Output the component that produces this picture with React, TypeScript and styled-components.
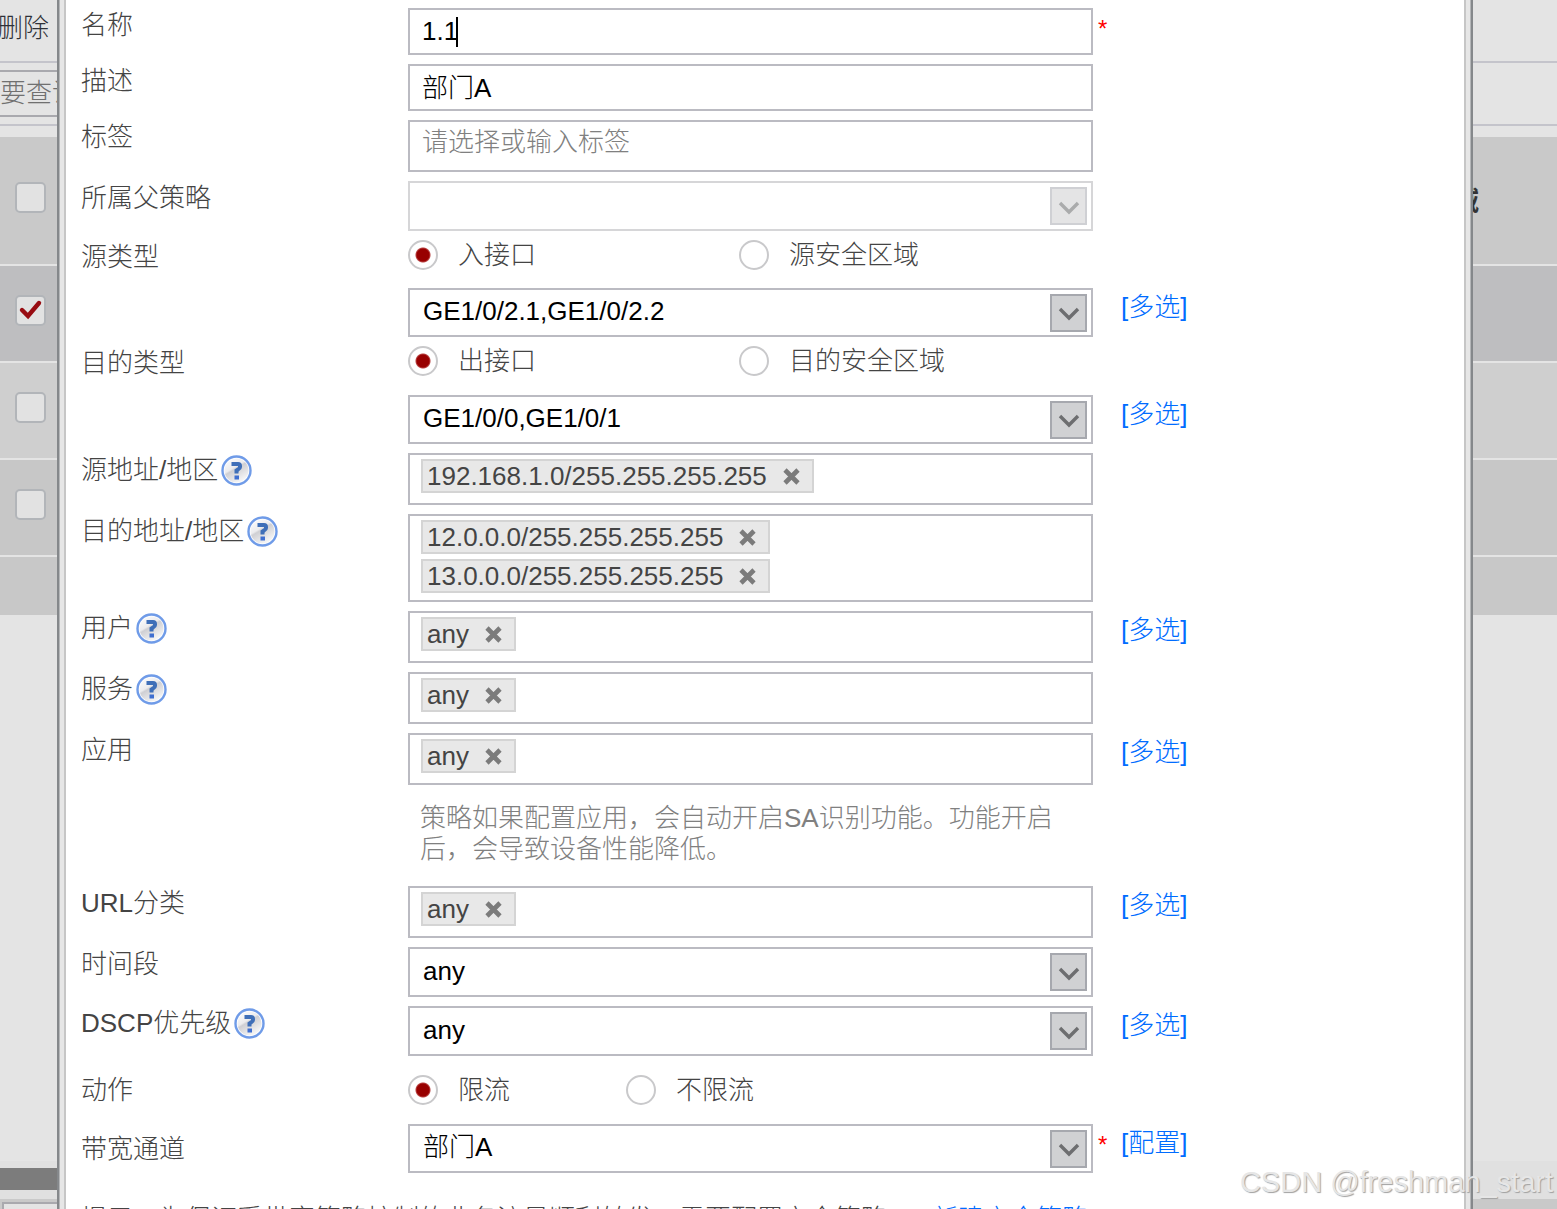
import React from "react";
import styled, { createGlobalStyle, css } from "styled-components";

const FONT = '"Liberation Sans", "Noto Sans CJK SC", sans-serif';

const GlobalStyle = createGlobalStyle`
  *, *::before, *::after { box-sizing: border-box; }
  body { margin: 0; background: #e4e4e4; }
  body, input, select, button {
    font-family: ${FONT};
    font-size: 26px;
    font-weight: 300;
  }
`;

const Shell = styled.div`
  display: grid;
  grid-template: 100vh / 100%;
  height: 100vh;
  overflow: hidden;
  position: relative;
  background: #e4e4e4;
`;

/* ---------- page behind the dialog ---------- */

const Backdrop = styled.div`
  grid-area: 1 / 1;
  min-width: 0;
  display: flex;
  flex-direction: column;
  overflow: hidden;
`;

const Toolbar = styled.div`
  flex: none;
  height: 63px;
  padding: 11px 0;
  border-bottom: 2px solid #c4c4cb;
`;

const ToolButton = styled.button`
  border: 0;
  padding: 0;
  background: none;
  color: #2f3138;
  line-height: 34px;
  margin-left: -3px;
`;

const SearchBar = styled.div`
  flex: none;
  height: 63px;
  padding-top: 7px;
  border-bottom: 2px solid #c4c4cb;
`;

const SearchBox = styled.input`
  display: block;
  width: 400px;
  height: 47px;
  padding: 0;
  border: 2px solid #a9a9ae;
  border-left: 0;
  background: #e4e4e4;
  &::placeholder { color: #707070; opacity: 1; }
`;

const PolicyTable = styled.table`
  width: 100%;
  margin-top: 11px;
  border-collapse: collapse;
  text-align: left;
  color: #333;
`;

const PolicyRow = styled.tr<{ $tone: string; $height: number; $last?: boolean }>`
  height: ${(p) => p.$height}px;
  background: ${(p) => p.$tone};
  border-bottom: ${(p) => (p.$last ? "0" : "2px solid #e4e4e4")};
`;

const Cell = styled.td`
  padding: 0 0 6px 15px;
`;

const HeadCell = styled.th`
  padding: 0 78px 5px 0;
  text-align: right;
  font-weight: 700;
`;

const Check = styled.input`
  appearance: none;
  display: block;
  width: 31px;
  height: 31px;
  margin: 0;
  border: 2px solid #b2b5b9;
  border-radius: 5px;
  background: #e2e2e2;
`;

const CheckWrap = styled.label`
  display: grid;
  width: 31px;
  & > * { grid-area: 1 / 1; }
  svg { pointer-events: none; }
`;

const ScrollTrack = styled.div`
  flex: none;
  margin-top: auto;
  height: 38px;
  padding: 7px 0 9px;
  background: #e0e0e0;
`;

const ScrollThumb = styled.div`
  width: 50%;
  height: 22px;
  background: #7c7c7c;
`;

const Pager = styled.div`
  flex: none;
  height: 10px;
  padding: 3px 2px 0;
  background: #c9c9c9;
`;

const PagerPanel = styled.div`
  width: 60%;
  height: 7px;
  border: 2px solid #a9a9ae;
  border-bottom: 0;
  background: #e4e4e4;
`;

/* ---------- dialog ---------- */

const Dialog = styled.section`
  grid-area: 1 / 1;
  z-index: 1;
  min-width: 0;
  overflow: hidden;
  margin: 0 84px 0 57px;
  padding: 0 9px;
  background:
    linear-gradient(90deg, #85888b 0 2px, #b4b6b8 2px 3px, #e6e6e6 3px 7px, #c6c6c6 7px 9px) left / 9px 100% no-repeat,
    linear-gradient(270deg, #85888b 0 2px, #b4b6b8 2px 3px, #e6e6e6 3px 7px, #c6c6c6 7px 9px) right / 9px 100% no-repeat,
    #fff;
`;

const Form = styled.form`
  display: flex;
  flex-direction: column;
  gap: 9px;
  padding: 8px 15px 0;
  color: #444;
`;

const Row = styled.div<{ $middle?: boolean; $min?: number }>`
  display: grid;
  grid-template-columns: 327px minmax(0, 685px) minmax(0, 1fr);
  align-items: ${(p) => (p.$middle ? "center" : "start")};
  min-height: ${(p) => p.$min ?? 0}px;
`;

const LabelCell = styled.div`
  display: flex;
  align-items: center;
  gap: 3px;
  height: 34px;
  line-height: 34px;
`;

const Aside = styled.div`
  display: grid;
  grid-template-columns: 28px auto;
  align-self: start;
  justify-content: start;
  line-height: 34px;
  padding-top: 2px;
`;

const Required = styled.span`
  padding-left: 5px;
  font-size: 24px;
  line-height: 38px;
  color: #f00;
`;

const Link = styled.a`
  grid-column: 2;
  color: #006cff;
  text-decoration: none;
`;

const boxed = css`
  width: 100%;
  border: 2px solid #bbbbc2;
  background: #fff;
  color: #000;
`;

const TextBox = styled.input<{ $height: number }>`
  ${boxed}
  display: block;
  height: ${(p) => p.$height}px;
  padding: 0 12px;
  outline: 0;
  &::placeholder { color: #808080; opacity: 1; }
`;

const RaisedTextBox = styled(TextBox)`
  padding-bottom: 4px;
`;

const LabelBox = styled(TextBox)`
  padding-bottom: 8px;
`;

const NameWrap = styled.div`
  position: relative;
`;

const Caret = styled.span`
  position: absolute;
  left: 48px;
  top: 9px;
  width: 2px;
  height: 30px;
  background: #000;
`;

const SelectWrap = styled.div`
  display: grid;
  align-items: center;
  & > * { grid-area: 1 / 1; }
`;

const Select = styled.select<{ $height: number }>`
  ${boxed}
  appearance: none;
  height: ${(p) => p.$height}px;
  padding: 0 50px 3px 13px;
  border-radius: 0;
  outline: 0;
  opacity: 1;
  &:disabled { border-color: #d6d6d8; }
`;

const Arrow = styled.span<{ $off?: boolean }>`
  justify-self: end;
  display: grid;
  place-items: center;
  width: 37px;
  height: 38px;
  margin-right: 6px;
  padding-top: 3px;
  border: 2px solid ${(p) => (p.$off ? "#cfd0d4" : "#a6a8ae")};
  background: ${(p) => (p.$off ? "#e4e4e5" : "#d0d1d3")};
  color: ${(p) => (p.$off ? "#aaabac" : "#6d6e70")};
  pointer-events: none;
`;

const TagBox = styled.div`
  ${boxed}
  display: flex;
  flex-direction: column;
  align-items: flex-start;
  gap: 5px;
  min-height: 52px;
  padding: 4px 11px 7px;
`;

const Tag = styled.span`
  display: flex;
  align-items: center;
  gap: 16px;
  height: 34px;
  padding: 0 12px 0 4px;
  border: 2px solid #d4d4d4;
  background: #e8e8e8;
  color: #444;
  line-height: 30px;
`;

const TagClose = styled.button`
  display: block;
  padding: 0;
  border: 0;
  background: none;
  svg { display: block; }
`;

const Options = styled.div<{ $step: number }>`
  display: grid;
  grid-template-columns: ${(p) => p.$step}px auto;
  justify-content: start;
`;

const Option = styled.label`
  display: flex;
  align-items: center;
  gap: 20px;
  line-height: 30px;
`;

const Radio = styled.input`
  appearance: none;
  width: 30px;
  height: 30px;
  margin: 0;
  border: 2px solid #c9c9cb;
  border-radius: 50%;
  background: #fff;
  &:checked {
    background: radial-gradient(circle, #980000 0 6px, #b84040 7px, #fff 8px);
  }
`;

const Note = styled.p`
  grid-column: 2;
  margin: 0;
  padding: 9px 24px 12px 12px;
  color: #808080;
  line-height: 31px;
`;

const Tip = styled.p`
  margin: 0;
  padding-top: 20px;
  line-height: 34px;
  white-space: nowrap;
  a { margin-left: 12px; }
`;

const Watermark = styled.div`
  position: absolute;
  z-index: 2;
  right: 4px;
  bottom: 8px;
  font-family: "Liberation Sans", sans-serif;
  font-size: 29px;
  font-weight: 400;
  line-height: 38px;
  color: #e6e6e6;
  text-shadow: 1px 1px 1px #a0a0a0;
`;

/* ---------- parts ---------- */

const HelpIcon = () => (
  <svg width="31" height="31" viewBox="0 0 31 31" role="img" aria-label="帮助">
    <defs>
      <linearGradient id="helpFace" x1="0" y1="0" x2="0.6" y2="1">
        <stop offset="0" stopColor="#ffffff" />
        <stop offset="0.45" stopColor="#ececee" />
        <stop offset="0.52" stopColor="#cfcfd3" />
        <stop offset="1" stopColor="#f6f6f6" />
      </linearGradient>
    </defs>
    <circle cx="15.5" cy="15.5" r="14" fill="#fff" stroke="#6f9be8" strokeWidth="2.4" />
    <circle cx="15.5" cy="15.5" r="12" fill="url(#helpFace)" />
    <path d="M10.5 9 H17 Q19 9 19 11 V12 Q19 13.500 17 14.500 L15.500 15.500 V18.500" fill="none" stroke="#3f6fb8" strokeWidth="4" />
    <rect x="13.5" y="20.500" width="4.500" height="4" fill="#3f6fd0" />
  </svg>
);

const CloseIcon = () => (
  <svg width="17" height="17" viewBox="0 0 17 17" aria-hidden="true">
    <path d="M2 2 L15 15 M15 2 L2 15" stroke="#7b7b7b" strokeWidth="4.600" />
  </svg>
);

const Chevron = () => (
  <svg width="22" height="14" viewBox="0 0 22 14" aria-hidden="true">
    <path d="M2 2 L11 11 L20 2" fill="none" stroke="currentColor" strokeWidth="3.400" />
  </svg>
);

const TickMark = () => (
  <svg width="31" height="31" viewBox="0 0 31 31" aria-hidden="true">
    <path d="M7 15 L13 21 L24 8" fill="none" stroke="#980c12" strokeWidth="4.400" strokeLinecap="round" />
  </svg>
);

const Label = ({ id, text, help }: { id?: string; text: string; help?: boolean }) => (
  <LabelCell>
    <label htmlFor={id}>{text}</label>
    {help && <HelpIcon />}
  </LabelCell>
);

const Multi = () => (
  <Aside>
    <Link href="#multi">[多选]</Link>
  </Aside>
);

const Dropdown = ({ id, value, height, disabled, label }: {
  id: string; value: string; height: number; disabled?: boolean; label?: string;
}) => (
  <SelectWrap>
    <Select id={id} $height={height} disabled={disabled} aria-label={label} defaultValue={value}>
      <option value={value}>{value}</option>
    </Select>
    <Arrow $off={disabled}><Chevron /></Arrow>
  </SelectWrap>
);

const TagRow = ({ label, help, tags, multi }: {
  label: string; help?: boolean; tags: string[]; multi?: boolean;
}) => (
  <Row>
    <Label text={label} help={help} />
    <TagBox role="group" aria-label={label}>
      {tags.map((t) => (
        <Tag key={t}>
          {t}
          <TagClose type="button" aria-label={`移除 ${t}`}><CloseIcon /></TagClose>
        </Tag>
      ))}
    </TagBox>
    {multi && <Multi />}
  </Row>
);

const RadioRow = ({ label, name, options, step, min, middle }: {
  label: string; name: string; options: string[]; step: number; min: number; middle?: boolean;
}) => (
  <Row $min={min} $middle={middle}>
    <Label text={label} />
    <Options $step={step} role="radiogroup" aria-label={label}>
      {options.map((o, i) => (
        <Option key={o}>
          <Radio type="radio" name={name} defaultChecked={i === 0} />
          {o}
        </Option>
      ))}
    </Options>
  </Row>
);

const RowCheck = ({ checked }: { checked?: boolean }) => (
  <CheckWrap>
    <Check type="checkbox" defaultChecked={checked} aria-label="选择" />
    {checked && <TickMark />}
  </CheckWrap>
);

export default function App() {
  return (
    <Shell>
      <GlobalStyle />
      <Backdrop>
        <Toolbar><ToolButton type="button">删除</ToolButton></Toolbar>
        <SearchBar><SearchBox aria-label="查询" placeholder="要查询的内容" /></SearchBar>
        <PolicyTable>
          <thead>
            <PolicyRow $tone="#c9c9c9" $height={128}>
              <Cell><RowCheck /></Cell>
              <HeadCell>安全区域</HeadCell>
            </PolicyRow>
          </thead>
          <tbody>
            <PolicyRow $tone="#bebec0" $height={97}><Cell colSpan={2}><RowCheck checked /></Cell></PolicyRow>
            <PolicyRow $tone="#cfcfcf" $height={97}><Cell colSpan={2}><RowCheck /></Cell></PolicyRow>
            <PolicyRow $tone="#c7c7c7" $height={97}><Cell colSpan={2}><RowCheck /></Cell></PolicyRow>
            <PolicyRow $tone="#c8c8c8" $height={59} $last><Cell colSpan={2} /></PolicyRow>
          </tbody>
        </PolicyTable>
        <ScrollTrack><ScrollThumb /></ScrollTrack>
        <Pager><PagerPanel /></Pager>
      </Backdrop>

      <Dialog role="dialog" aria-label="带宽策略">
        <Form>
          <Row>
            <Label id="name" text="名称" />
            <NameWrap>
              <TextBox id="name" $height={47} defaultValue="1.1" />
              <Caret />
            </NameWrap>
            <Aside><Required>*</Required></Aside>
          </Row>
          <Row>
            <Label id="desc" text="描述" />
            <RaisedTextBox id="desc" $height={47} defaultValue="部门A" />
          </Row>
          <Row>
            <Label id="tags" text="标签" />
            <LabelBox id="tags" $height={52} placeholder="请选择或输入标签" />
          </Row>
          <Row>
            <Label id="parent" text="所属父策略" />
            <Dropdown id="parent" value="" height={50} disabled />
          </Row>
          <RadioRow label="源类型" name="src" options={["入接口", "源安全区域"]} step={331} min={39} />
          <Row>
            <span />
            <Dropdown id="srcif" value="GE1/0/2.1,GE1/0/2.2" height={49} label="入接口" />
            <Multi />
          </Row>
          <RadioRow label="目的类型" name="dst" options={["出接口", "目的安全区域"]} step={331} min={40} />
          <Row>
            <span />
            <Dropdown id="dstif" value="GE1/0/0,GE1/0/1" height={49} label="出接口" />
            <Multi />
          </Row>
          <TagRow label="源地址/地区" help tags={["192.168.1.0/255.255.255.255"]} />
          <TagRow label="目的地址/地区" help tags={["12.0.0.0/255.255.255.255", "13.0.0.0/255.255.255.255"]} />
          <TagRow label="用户" help tags={["any"]} multi />
          <TagRow label="服务" help tags={["any"]} />
          <TagRow label="应用" tags={["any"]} multi />
          <Row>
            <Note>策略如果配置应用，会自动开启SA识别功能。功能开启后，会导致设备性能降低。</Note>
          </Row>
          <TagRow label="URL分类" tags={["any"]} multi />
          <Row>
            <Label id="time" text="时间段" />
            <Dropdown id="time" value="any" height={50} />
          </Row>
          <Row>
            <Label id="dscp" text="DSCP优先级" help />
            <Dropdown id="dscp" value="any" height={50} />
            <Multi />
          </Row>
          <RadioRow label="动作" name="action" options={["限流", "不限流"]} step={218} min={50} middle />
          <Row $middle>
            <Label id="channel" text="带宽通道" />
            <Dropdown id="channel" value="部门A" height={49} />
            <Aside>
              <Required>*</Required>
              <Link href="#config">[配置]</Link>
            </Aside>
          </Row>
          <Tip>
            提示：为保证受带宽策略控制的业务流量顺利转发，需要配置安全策略。
            <Link href="#new">[新建安全策略]</Link>
          </Tip>
        </Form>
      </Dialog>
      <Watermark>CSDN @freshman_start</Watermark>
    </Shell>
  );
}
